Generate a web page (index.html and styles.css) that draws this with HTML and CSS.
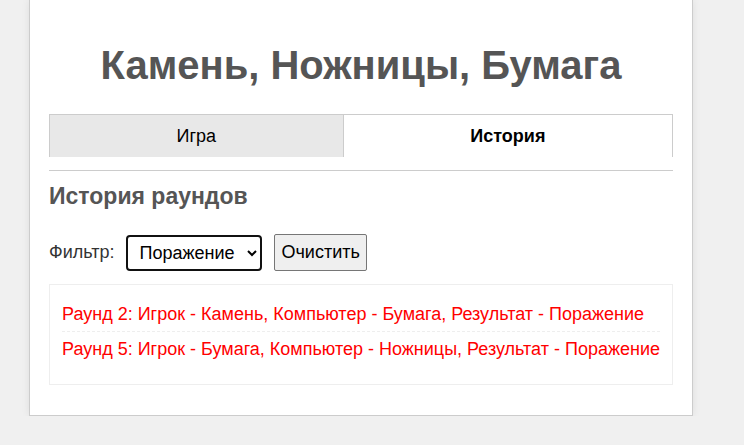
FILE: index.html
```html
<!DOCTYPE html>
<html lang="ru">
<head>
<meta charset="utf-8">
<title>Камень, Ножницы, Бумага</title>
<link rel="stylesheet" href="styles.css">
</head>
<body>
<div class="container">
  <h1 class="title">Камень, Ножницы, Бумага</h1>
  <div class="tabs">
    <button class="tab">Игра</button>
    <button class="tab active">История</button>
  </div>
  <div class="panel">
    <h2 class="subtitle">История раундов</h2>
    <div class="filter">
      <label class="filter-label" for="f">Фильтр:</label>
      <select id="f" class="filter-select">
        <option>Все</option>
        <option>Победа</option>
        <option selected>Поражение</option>
        <option>Ничья</option>
      </select>
      <button class="clear-btn">Очистить</button>
    </div>
    <ul class="history">
      <li class="round loss">Раунд 2: Игрок - Камень, Компьютер - Бумага, Результат - Поражение</li>
      <li class="round loss">Раунд 5: Игрок - Бумага, Компьютер - Ножницы, Результат - Поражение</li>
    </ul>
  </div>
</div>
</body>
</html>
```
FILE: styles.css
```css
html, body {
  margin: 0;
  padding: 0;
  background: #f0f0f0;
  font-family: "Liberation Sans", Arial, sans-serif;
}
body {
  padding-left: 29px;
}
.container {
  width: 624px;
  padding: 1px 19px 30px;
  background: #fff;
  border: 1px solid #ccc;
  border-top: none;
  box-shadow: 0 0 8px rgba(0,0,0,0.08);
}
.title {
  margin: 42px 0 26px;
  text-align: center;
  font-size: 40px;
  font-weight: bold;
  color: #555;
}
.tabs {
  display: flex;
  padding-bottom: 13px;
  border-bottom: 1px solid #ccc;
}
.tab {
  flex: 1 1 auto;
  height: 43px;
  margin: 0;
  border: 1px solid #ccc;
  border-bottom: none;
  border-right: none;
  background: #e8e8e8;
  font-family: "Liberation Sans", Arial, sans-serif;
  font-size: 18px;
  color: #000;
  padding: 0;
}
.tab.active {
  background: #fff;
  font-weight: bold;
  border-right: 1px solid #ccc;
}
.subtitle {
  margin: 12px 0 25px;
  font-size: 23px;
  line-height: 26px;
  color: #555;
}
.filter {
  display: flex;
  align-items: center;
  gap: 12px;
  margin-bottom: 13px;
}
.filter-label {
  font-size: 18px;
  color: #333;
}
.filter-select {
  height: 36px;
  width: 136px;
  padding: 0 4px 0 7px;
  font-family: "Liberation Sans", Arial, sans-serif;
  font-size: 18px;
  color: #000;
  background: #fff;
  border: 2px solid #111;
  border-radius: 4px;
}
.clear-btn {
  height: 37px;
  padding: 0 6px;
  font-family: "Liberation Sans", Arial, sans-serif;
  font-size: 18px;
  color: #000;
  background: #efefef;
  border: 1px solid #767676;
  border-radius: 2px;
}
.history {
  list-style: none;
  margin: 0;
  padding: 12px 12px 18px;
  border: 1px solid #eee;
}
.round {
  padding: 7px 0;
  font-size: 18px;
  line-height: 20px;
  border-bottom: 1px dashed #eee;
}
.round:last-child {
  border-bottom: none;
}
.round.loss {
  color: #ff0000;
}
```
